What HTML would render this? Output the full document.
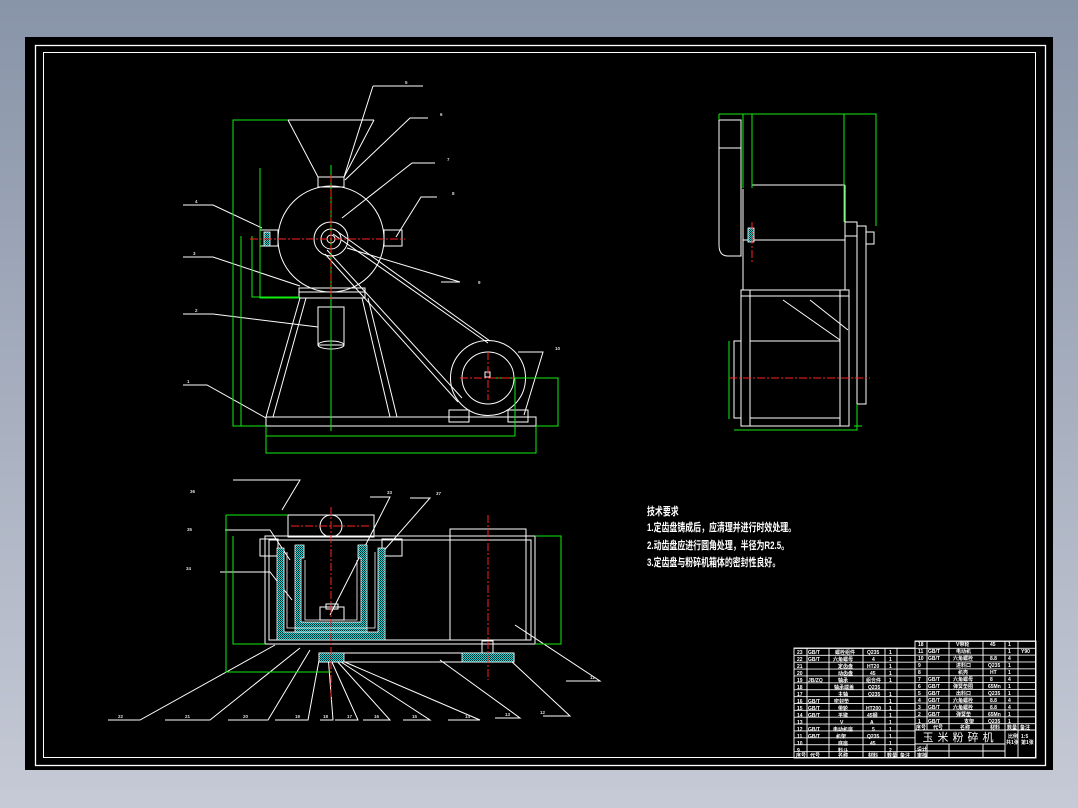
<!DOCTYPE html>
<html><head><meta charset="utf-8"><style>
html,body{margin:0;padding:0;width:1078px;height:808px;overflow:hidden;background:linear-gradient(#8894a8,#c6cad6);}
svg{display:block}
</style></head><body>
<svg width="1078" height="808" viewBox="0 0 1078 808" xmlns="http://www.w3.org/2000/svg" font-family="Liberation Sans, Noto Sans CJK SC, sans-serif">
<defs>
<pattern id="rows" x="0" y="648" width="10" height="6.875" patternUnits="userSpaceOnUse"><line x1="0" y1="0.4" x2="10" y2="0.4" stroke="#fff" stroke-width="0.9"/></pattern>
<pattern id="rows2" x="0" y="641" width="10" height="6.85" patternUnits="userSpaceOnUse"><line x1="0" y1="0.4" x2="10" y2="0.4" stroke="#fff" stroke-width="0.9"/></pattern>
<pattern id="hatch" width="2" height="2" patternUnits="userSpaceOnUse"><rect width="2" height="2" fill="#000"/><path d="M0 2L2 0" stroke="#2ee" stroke-width="0.9"/></pattern>
</defs>
<rect x="25" y="37" width="1028" height="733" fill="#000"/>
<rect x="35.5" y="45.5" width="1010" height="720" fill="none" stroke="#fff" stroke-width="1.3"/>
<rect x="43.5" y="52.5" width="992" height="705" fill="none" stroke="#fff" stroke-width="1"/>

<g fill="none" stroke="#fff" stroke-width="1">
<!-- front view -->
<path d="M288 120H374M288 120L318 177M374 120L344 177"/>
<rect x="318" y="177" width="26" height="10"/>
<circle cx="331" cy="239" r="53"/>
<circle cx="331" cy="239" r="17"/><circle cx="331" cy="239" r="10"/><circle cx="331" cy="239" r="4"/>
<rect x="260" y="230" width="18" height="16"/><rect x="384" y="230" width="18" height="16"/>
<rect x="299" y="288" width="66" height="10"/><path d="M299 292H365"/>
<rect x="318" y="307" width="26" height="38"/><ellipse cx="331" cy="345" rx="13" ry="4"/>
<path d="M300 298L266 417M306 298L273 417M362 298L390 417M368 298L397 417"/>
<rect x="266" y="417" width="270" height="9"/>
<circle cx="488" cy="378" r="37.5"/><circle cx="488" cy="378" r="26"/><rect x="485" y="372" width="5" height="5"/>
<path d="M338 232L490 341M333 234L488 343M327 250L462 398M325 254L458 402"/>
<path d="M449 410h20v12h-20zM508 410h20v12h-20z"/>
<!-- leaders -->
<path d="M373 86H423M373 86L344 177M428 118H410L345 180M435 163H412L342 218M437 197H421L396 237M441 282H460L347 248M183 205H213L262 228M183 257H213L300 286M183 314H213L318 327M183 385H207L266 418M518 352H543L524 415"/>
<!-- right view -->
<path d="M719 120H741V256H728Q719 256 719 245Z M719 148H741"/>
<path d="M752 185H845M743 189V290M845 185V290M743 240H845"/>
<path d="M741 290H849V426H741Z M750 290V426M840 290V426M741 296H849M750 341H840M750 418H840M783 300L840 340M810 300L848 330"/>
<rect x="734" y="341" width="7" height="77"/>
<rect x="857" y="226" width="9" height="178"/><rect x="866" y="232" width="8" height="12"/>
<rect x="845" y="222" width="12" height="14"/>
<!-- bottom view -->
<rect x="288" y="515" width="86" height="22"/><circle cx="331" cy="526" r="11"/>
<rect x="265" y="536" width="270" height="108"/><rect x="269" y="540" width="262" height="100"/>
<rect x="260" y="539" width="18" height="17"/><rect x="382" y="539" width="20" height="17"/>
<rect x="450" y="529" width="76" height="111"/>
<rect x="319" y="653" width="195" height="9"/><rect x="482" y="641" width="11" height="12"/>
<path d="M320 607h24v13h-24zM326 604h12v5h-12z"/>
<path d="M233 480H300L282 510M225 530H270L290 560M220 572H270L292 600M370 497H390L330 615M410 498H430L380 555"/>
<path d="M108 720H140L275 645M165 720H210L300 648M228 720H268L310 650M275 720H308L320 655M320 720H333L328 655M335 720H358L331 660M363 720H390L336 660M403 720H430L338 660M448 720H480L340 660M495 718H520L440 660M543 716H570L510 660M566 681H600L515 625"/>
</g>
<g fill="url(#hatch)" stroke="#fff" stroke-width="0.8">
<path d="M277 548h7v84h94v-84h7v92h-108z"/>
<path d="M295 545h9v13h-3v64h60v-64h-3v-13h9v87h-72z"/>
<rect x="319" y="653" width="25" height="9"/><rect x="462" y="653" width="52" height="9"/>
<rect x="264" y="232" width="6" height="14"/><rect x="748" y="228" width="6" height="14"/>
</g>
<path d="M287 552V628H375V552M305 560V620H357V560" fill="none" stroke="#fff" stroke-width="0.8"/>
<g fill="none" stroke="#1e1" stroke-width="1">
<path d="M288 120H233V426H266M260 168V298H299M241 236V426M252 236V297H299M331 165V431"/>
<path d="M266 426V453H536V426M266 436H515M488 378H558V426H536M515 378V436"/>
<path d="M719 114H876V226M719 114V120M743 114V188M752 114V188M844 114V222M729 341V419M734 430H857V404M854 426H862"/>
<path d="M226 515H288M226 515V672H331M233 536V644H265M535 536H561V644H535"/>
</g>
<g stroke="#f22" stroke-width="1" stroke-dasharray="8 2 2 2">
<path d="M331 175V300M250 239H405M488 352V400M460 378H515M729 378H870M752 222V262M331 507V700M488 515V680M291 526H371"/>
</g>
<g fill="#ddd" font-size="4.5" font-weight="bold">
<text x="405" y="84">5</text><text x="440" y="116">6</text><text x="447" y="161">7</text><text x="452" y="195">8</text><text x="478" y="284">9</text><text x="195" y="203">4</text><text x="193" y="255">3</text><text x="195" y="312">2</text><text x="187" y="383">1</text><text x="555" y="350">10</text>
<text x="190" y="493">36</text><text x="187" y="531">35</text><text x="186" y="570">34</text><text x="387" y="494">33</text><text x="436" y="495">37</text>
<text x="118" y="718">22</text><text x="185" y="718">21</text><text x="243" y="718">20</text><text x="295" y="718">19</text><text x="323" y="718">18</text><text x="347" y="718">17</text><text x="374" y="718">16</text><text x="412" y="718">15</text><text x="465" y="718">14</text><text x="505" y="716">13</text><text x="540" y="714">12</text><text x="590" y="679">11</text>
</g>
<!-- tech requirements -->
<g fill="#fff" font-weight="bold" font-size="11" transform="translate(647 0) scale(0.72 1)">
<text x="0" y="515">技术要求</text>
<text x="0" y="531">1.定齿盘铸成后，应清理并进行时效处理。</text>
<text x="0" y="549">2.动齿盘应进行圆角处理，半径为R2.5。</text>
<text x="0" y="566">3.定齿盘与粉碎机箱体的密封性良好。</text>
</g>
<!-- tables -->
<rect x="794" y="648" width="121" height="110" fill="url(#rows)"/>
<rect x="915" y="641" width="121" height="89" fill="url(#rows2)"/>
<g fill="none" stroke="#fff" stroke-width="0.9">
<rect x="794" y="648" width="121" height="110"/>
<rect x="915" y="641" width="121" height="117"/>
<path d="M807 648V758M829 648V758M863 648V758M885 648V758M897 648V758"/>
<path d="M927 641V730M949 641V730M983 641V730M1005 641V758M1018 641V758M915 730H1036M915 744H1005M915 751H1005M927 744V758M949 744V758M983 744V758"/>
</g>
<rect x="915.5" y="730.5" width="89" height="13" fill="#000"/>
<text x="960" y="741" fill="#fff" font-size="11" text-anchor="middle" letter-spacing="4" font-family="Liberation Sans, Noto Sans CJK SC, sans-serif">玉米粉碎机</text>
<g fill="#fff" font-size="5" font-weight="bold" font-family="Liberation Sans, Noto Sans CJK SC, sans-serif">
<text x="797" y="654">23</text><text x="808" y="654">GB/T</text><text x="835" y="654">螺栓组件</text><text x="867" y="654">Q235</text><text x="889" y="654">1</text>
<text x="797" y="661">22</text><text x="808" y="661">GB/T</text><text x="833" y="661">六角螺母</text><text x="872" y="661">4</text><text x="889" y="661">1</text>
<text x="797" y="668">21</text><text x="838" y="668">定齿盘</text><text x="867" y="668">HT20</text><text x="889" y="668">1</text>
<text x="797" y="675">20</text><text x="838" y="675">动齿盘</text><text x="870" y="675">45</text><text x="889" y="675">1</text>
<text x="797" y="682">19</text><text x="808" y="682">JB/ZQ</text><text x="838" y="682">轴承</text><text x="866" y="682">组合件</text><text x="889" y="682">1</text>
<text x="797" y="689">18</text><text x="834" y="689">轴承端盖</text><text x="868" y="689">Q235</text>
<text x="797" y="696">17</text><text x="838" y="696">主轴</text><text x="868" y="696">Q235</text><text x="889" y="696">1</text>
<text x="797" y="703">16</text><text x="808" y="703">GB/T</text><text x="834" y="703">密封垫</text><text x="889" y="703">1</text>
<text x="797" y="710">15</text><text x="808" y="710">GB/T</text><text x="838" y="710">带轮</text><text x="866" y="710">HT200</text><text x="889" y="710">1</text>
<text x="797" y="717">14</text><text x="808" y="717">GB/T</text><text x="838" y="717">平键</text><text x="867" y="717">45钢</text><text x="889" y="717">1</text>
<text x="797" y="724">13</text><text x="840" y="724">V</text><text x="870" y="724">A</text><text x="889" y="724">1</text>
<text x="797" y="731">12</text><text x="808" y="731">GB/T</text><text x="833" y="731">电动机座</text><text x="872" y="731">5</text><text x="889" y="731">1</text>
<text x="797" y="738">11</text><text x="808" y="738">GB/T</text><text x="836" y="738">机架</text><text x="867" y="738">Q235</text><text x="889" y="738">1</text>
<text x="797" y="745">10</text><text x="838" y="745">底座</text><text x="870" y="745">45</text><text x="889" y="745">1</text>
<text x="797" y="752">9</text><text x="838" y="752">料斗</text><text x="889" y="752">2</text>
<text x="796" y="757">序号</text><text x="810" y="757">代号</text><text x="838" y="757">名称</text><text x="868" y="757">材料</text><text x="887" y="757">数量</text><text x="900" y="757">备注</text>
<text x="918" y="646">18</text><text x="956" y="646">V带轮</text><text x="990" y="646">45</text><text x="1008" y="646">1</text>
<text x="918" y="653">11</text><text x="928" y="653">GB/T</text><text x="956" y="653">电动机</text><text x="1008" y="653">1</text><text x="1021" y="653">Y90</text>
<text x="918" y="660">10</text><text x="928" y="660">GB/T</text><text x="953" y="660">六角螺栓</text><text x="990" y="660">8.8</text><text x="1008" y="660">4</text>
<text x="918" y="667">9</text><text x="956" y="667">进料口</text><text x="988" y="667">Q235</text><text x="1008" y="667">1</text>
<text x="918" y="674">8</text><text x="958" y="674">机壳</text><text x="990" y="674">HT</text><text x="1008" y="674">1</text>
<text x="918" y="681">7</text><text x="928" y="681">GB/T</text><text x="953" y="681">六角螺母</text><text x="990" y="681">8</text><text x="1008" y="681">4</text>
<text x="918" y="688">6</text><text x="928" y="688">GB/T</text><text x="953" y="688">弹簧垫圈</text><text x="988" y="688">65Mn</text><text x="1008" y="688">1</text>
<text x="918" y="695">5</text><text x="928" y="695">GB/T</text><text x="956" y="695">出料口</text><text x="988" y="695">Q235</text><text x="1008" y="695">1</text>
<text x="918" y="702">4</text><text x="928" y="702">GB/T</text><text x="953" y="702">六角螺栓</text><text x="990" y="702">8.8</text><text x="1008" y="702">4</text>
<text x="918" y="709">3</text><text x="928" y="709">GB/T</text><text x="953" y="709">六角螺栓</text><text x="990" y="709">8.8</text><text x="1008" y="709">4</text>
<text x="918" y="716">2</text><text x="928" y="716">GB/T</text><text x="956" y="716">弹簧垫</text><text x="988" y="716">65Mn</text><text x="1008" y="716">1</text>
<text x="918" y="723">1</text><text x="928" y="723">GB/T</text><text x="964" y="723">支架</text><text x="988" y="723">Q235</text><text x="1008" y="723">1</text>
<text x="916" y="729">序号</text><text x="933" y="729">代号</text><text x="960" y="729">名称</text><text x="990" y="729">材料</text><text x="1007" y="729">数量</text><text x="1020" y="729">备注</text>
<text x="1008" y="738">比例</text><text x="1021" y="738">1:5</text><text x="1006" y="744">共1张</text><text x="1021" y="744">第1张</text>
<text x="917" y="751">设计</text><text x="917" y="757">审核</text>
</g>
</svg>
</body></html>
